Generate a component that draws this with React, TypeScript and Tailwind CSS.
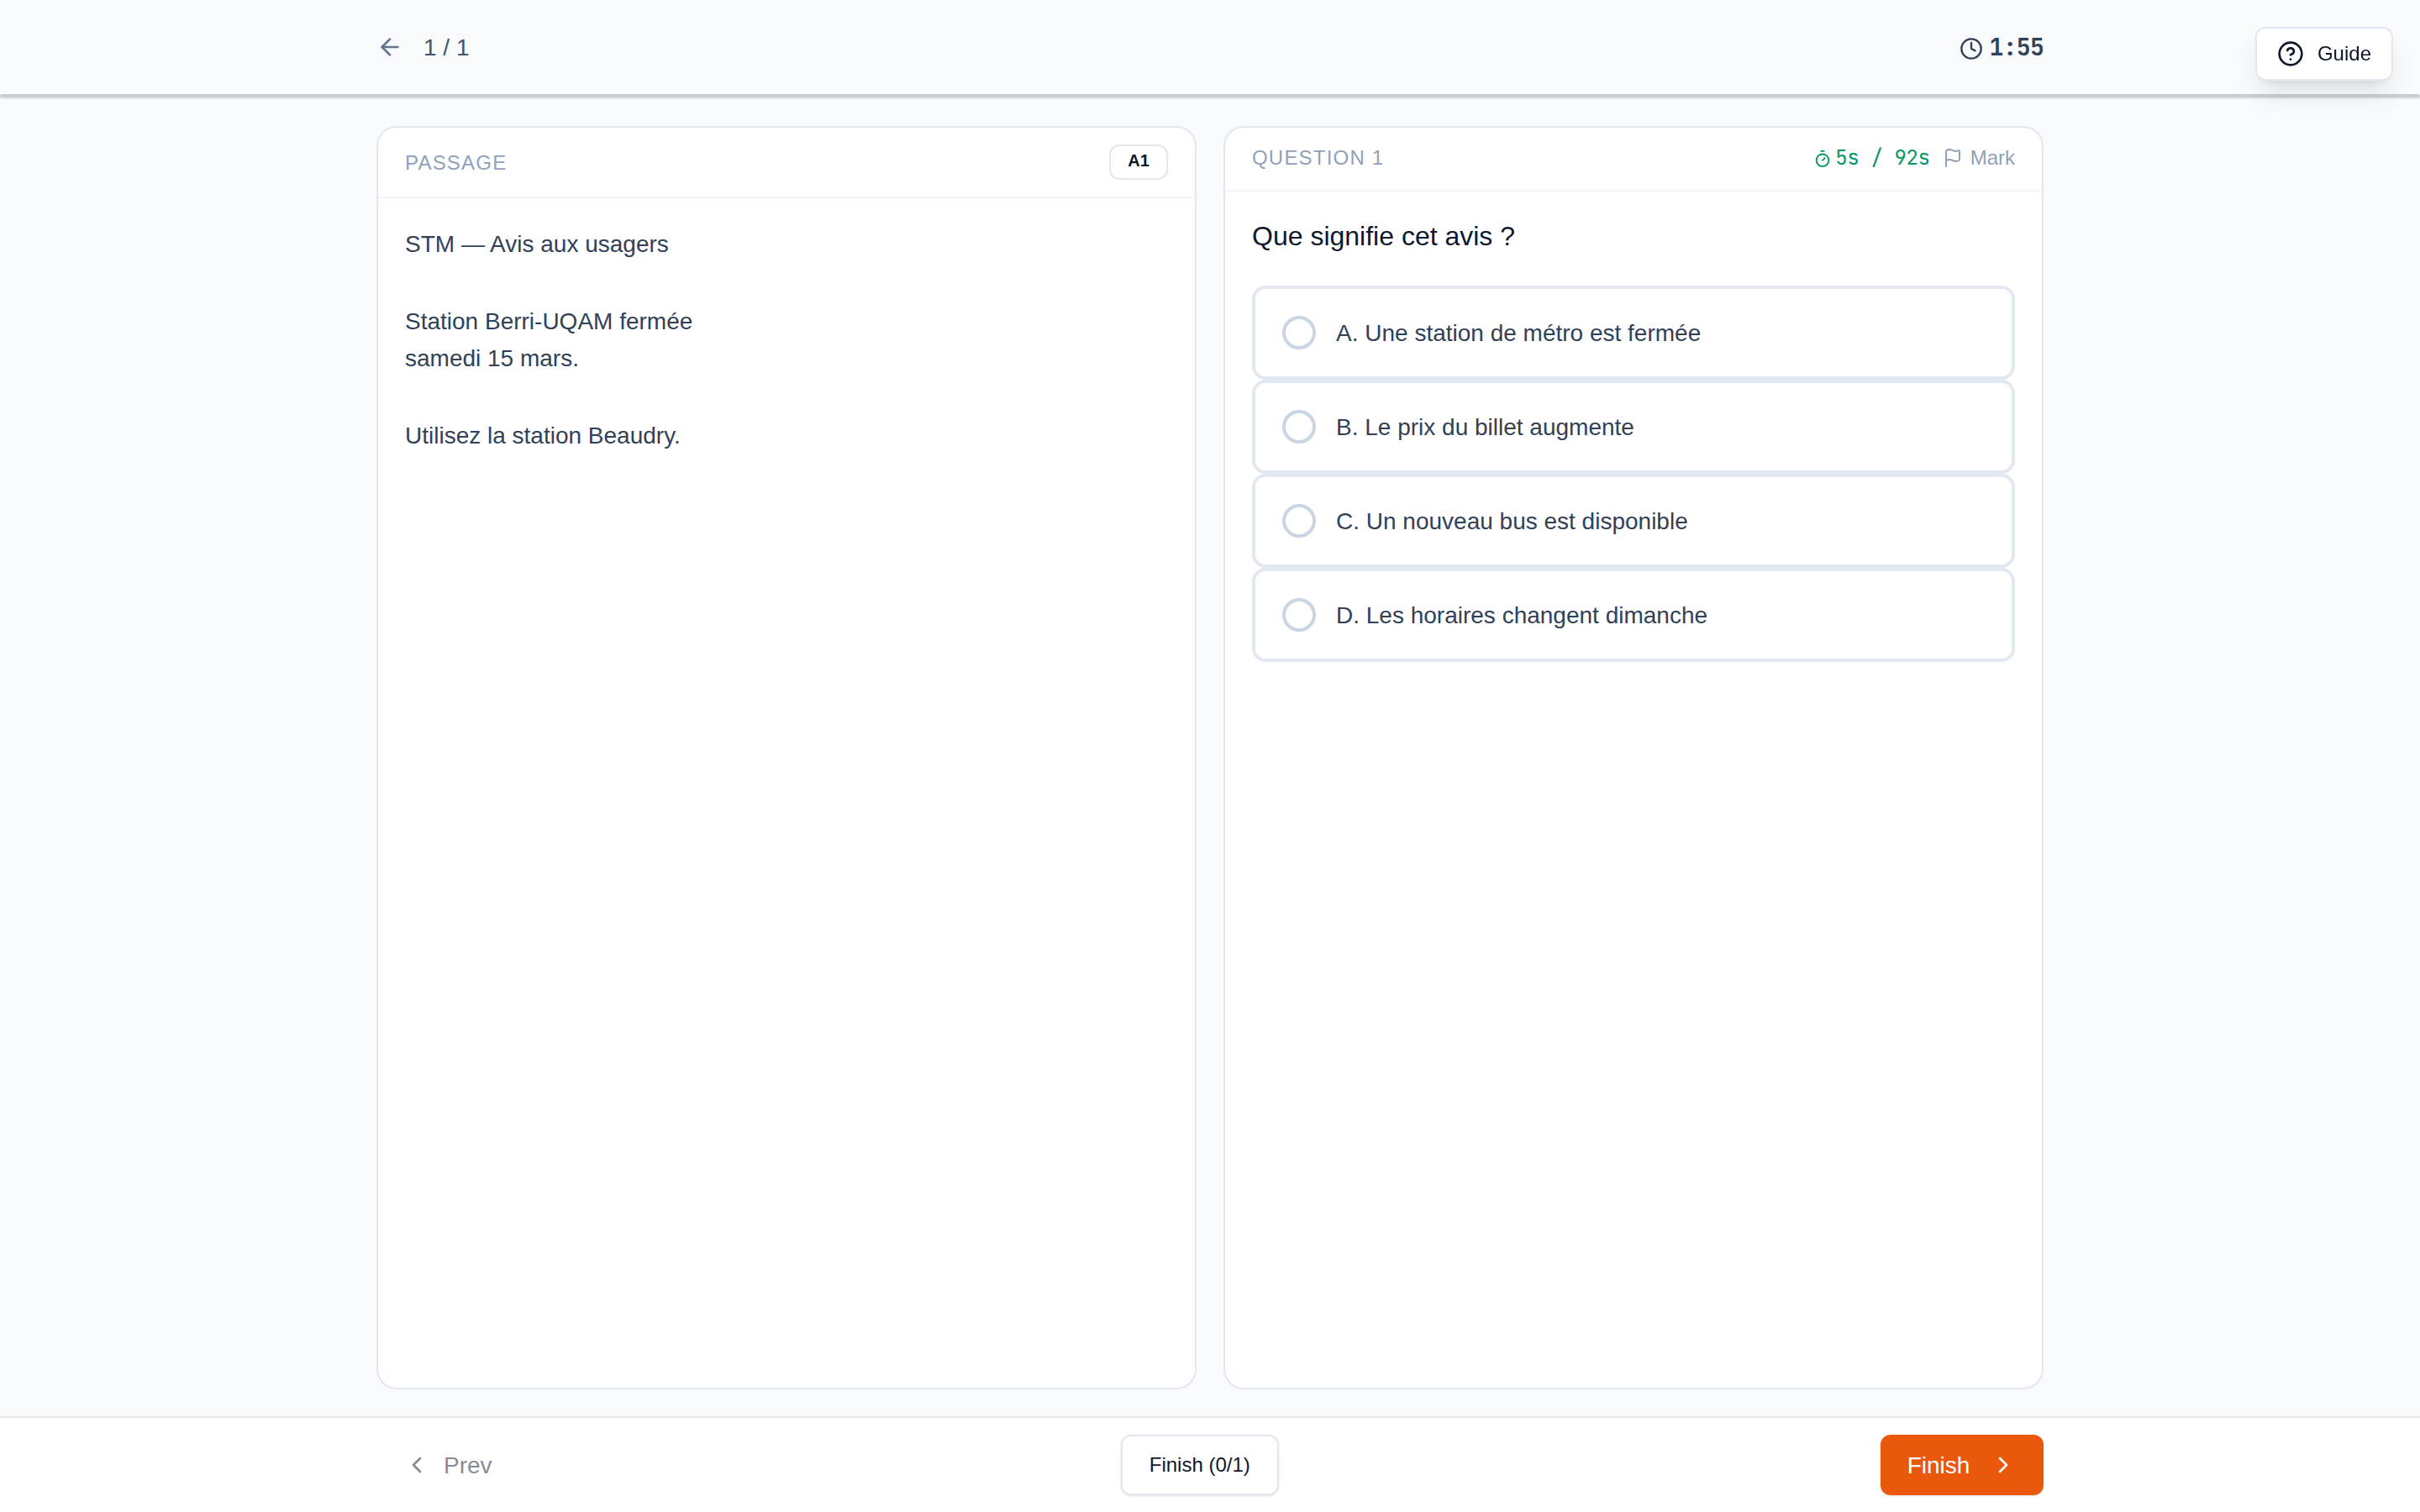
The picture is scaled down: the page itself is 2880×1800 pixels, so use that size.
import { ArrowLeft, ChevronLeft, ChevronRight, CircleHelp, Clock, Flag, Timer } from "lucide-react";

const passage = [
  "STM — Avis aux usagers",
  "Station Berri-UQAM fermée\nsamedi 15 mars.",
  "Utilisez la station Beaudry.",
];

const options = [
  "A. Une station de métro est fermée",
  "B. Le prix du billet augmente",
  "C. Un nouveau bus est disponible",
  "D. Les horaires changent dimanche",
];

function Header() {
  return (
    <header className="h-[118px] shrink-0 border-b-2 border-slate-200">
      <div className="mx-auto flex h-28 w-[1984px] items-center justify-between">
        <div className="flex items-center gap-6">
          <button aria-label="Back" className="text-slate-500">
            <ArrowLeft className="size-8" />
          </button>
          <span className="pt-0.5 text-[28px] leading-10 text-slate-600">1 / 1</span>
        </div>
        <div className="flex items-center gap-2 text-slate-700">
          <Clock className="mt-1 size-7" />
          <span className="font-['JetBrains_Mono','Liberation_Mono',monospace] text-[28px] leading-10 font-bold tracking-tight">
            1:55
          </span>
        </div>
      </div>
      {/* Time progress */}
      <div className="h-1 rounded-full bg-slate-900/20" />
    </header>
  );
}

function PassagePanel() {
  return (
    <section className="flex flex-1 flex-col rounded-3xl border-2 border-slate-200 bg-white">
      <div className="flex h-[84px] items-center justify-between border-b-2 border-slate-100 px-8">
        <span className="pt-0.5 text-2xl tracking-[1.2px] text-slate-400 uppercase">Passage</span>
        <span className="flex h-[42px] w-[70px] items-center justify-center rounded-xl border-2 border-slate-200 pb-1 text-xl font-bold text-slate-900">
          A1
        </span>
      </div>
      <div className="flex flex-col gap-12 px-8 pt-[33px] text-[28px] leading-[44px] whitespace-pre-wrap text-slate-700">
        {passage.map((paragraph) => (
          <p key={paragraph}>{paragraph}</p>
        ))}
      </div>
    </section>
  );
}

function QuestionPanel() {
  return (
    <section className="flex flex-1 flex-col rounded-3xl border-2 border-slate-200 bg-white">
      <div className="flex h-[76px] items-center justify-between border-b-2 border-slate-100 px-8 pb-0.5">
        <span className="text-2xl tracking-[1.2px] text-slate-400 uppercase">Question 1</span>
        <div className="flex items-center gap-[15px]">
          <span className="flex items-center gap-1 font-['JetBrains_Mono','Liberation_Mono',monospace] text-2xl tracking-[-0.015em] text-[#059669]">
            <Timer className="mt-0.5 size-[22px]" />
            5s / 92s
          </span>
          <button className="flex items-center gap-[9px] text-2xl text-slate-400">
            <Flag className="size-6" />
            Mark
          </button>
        </div>
      </div>
      <div className="px-8 pt-[31px]">
        <h2 className="text-[32px] leading-[44px] text-slate-900">Que signifie cet avis ?</h2>
        <div className="mt-[37px]">
          {options.map((option) => (
            <button
              key={option}
              className="flex h-28 w-full items-center gap-6 rounded-2xl border-4 border-slate-200 px-8 text-left text-[28px] text-slate-700"
            >
              <span className="size-10 rounded-full border-4 border-slate-300" />
              <span className="pt-0.5">{option}</span>
            </button>
          ))}
        </div>
      </div>
    </section>
  );
}

function Footer() {
  return (
    <footer className="h-[114px] shrink-0 border-t-2 border-slate-200 bg-white">
      <div className="mx-auto flex h-full w-[1984px] items-center justify-between">
        <button className="flex h-18 items-center gap-4 px-8 text-[28px] text-slate-900 opacity-50" disabled>
          <ChevronLeft className="size-8" />
          <span className="pt-0.5">Prev</span>
        </button>
        <button className="h-18 w-[188px] rounded-xl border-2 border-slate-200 bg-white text-2xl text-slate-900 shadow-sm">
          Finish (0/1)
        </button>
        <button className="flex h-18 w-[194px] items-center justify-center gap-6 rounded-xl bg-[#ea580c] text-[28px] text-white shadow">
          <span className="pt-0.5">Finish</span>
          <ChevronRight className="size-8" />
        </button>
      </div>
    </footer>
  );
}

export default function App() {
  return (
    <div className="flex h-[1800px] w-[2880px] flex-col bg-slate-50 font-['Liberation_Sans',Arial,sans-serif]">
      <Header />
      <main className="mx-auto flex w-[1984px] flex-1 gap-8 py-8">
        <PassagePanel />
        <QuestionPanel />
      </main>
      <Footer />

      <button className="fixed top-8 right-8 flex h-16 items-center gap-4 rounded-xl border-2 border-slate-200 bg-white px-6 text-2xl text-slate-900 shadow-[0_20px_30px_-6px_rgb(0_0_0/0.1),0_8px_12px_-8px_rgb(0_0_0/0.1)]">
        <CircleHelp className="size-8" />
        Guide
      </button>
    </div>
  );
}
